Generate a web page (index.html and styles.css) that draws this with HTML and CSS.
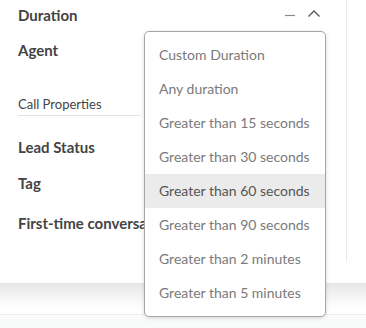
FILE: index.html
```html
<!DOCTYPE html>
<html lang="en">
<head>
<meta charset="UTF-8" />
<title>Filters</title>
<link rel="stylesheet" href="styles.css">
</head>
<body>

<div class="panel">
  <div class="filters">
    <div class="filter-head">
      <span class="filter-title">Duration</span>
      <span class="head-icons">
        <svg width="12" height="12" viewBox="0 0 12 12"><path d="M1 7.5h10" stroke="#8a8a8a" stroke-width="1.2" fill="none"/></svg>
        <svg width="14" height="12" viewBox="0 0 14 12"><path d="M1.5 8.5L7 3l5.5 5.5" stroke="#555" stroke-width="1.3" fill="none"/></svg>
      </span>
    </div>
    <div class="filter-row agent">Agent</div>
    <div class="section-label">Call Properties</div>
    <div class="filter-row lead">Lead Status</div>
    <div class="filter-row tag">Tag</div>
    <div class="filter-row first">First-time conversation</div>

    <ul class="dropdown">
      <li>Custom Duration</li>
      <li>Any duration</li>
      <li>Greater than 15 seconds</li>
      <li>Greater than 30 seconds</li>
      <li class="active">Greater than 60 seconds</li>
      <li>Greater than 90 seconds</li>
      <li>Greater than 2 minutes</li>
      <li>Greater than 5 minutes</li>
    </ul>
  </div>
</div>
<div class="panel-foot"></div>

</body>
</html>
```

FILE: styles.css
```css
* {
  box-sizing: border-box;
}
body {
  margin: 0;
  font-family: 'Lato', 'Noto Sans', sans-serif;
  background: #f9fafa;
  color: #444;
  width: 366px;
  height: 328px;
  overflow: hidden;
}
.panel {
  background: #fff;
  height: 283px;
  padding-right: 19px;
}
.filters {
  position: relative;
  height: 262px;
  border-right: 1px solid #ebebeb;
  padding-left: 18px;
  padding-right: 25px;
}
.filter-head {
  height: 30px;
  display: flex;
  align-items: center;
  justify-content: space-between;
}
.filter-title,
.filter-row {
  font-size: 15px;
  font-weight: 700;
  color: #444;
  white-space: nowrap;
}
.head-icons {
  display: flex;
  align-items: center;
  gap: 11px;
  margin-top: -3px;
}
.filter-row {
  display: flex;
  align-items: center;
}
.agent {
  height: 40px;
}
.section-label {
  margin-top: 20px;
  height: 26px;
  font-size: 13px;
  color: #444;
  line-height: 28px;
  border-bottom: 1px solid #e4e4e4;
  margin-right: 180px;
}
.lead {
  margin-top: 14px;
  height: 34px;
}
.tag {
  margin-top: 2px;
  height: 34px;
}
.first {
  margin-top: 4px;
  height: 38px;
}
.dropdown {
  position: absolute;
  left: 144px;
  top: 31px;
  width: 182px;
  height: 286px;
  margin: 0;
  padding: 6px 0;
  list-style: none;
  background: #fff;
  border: 1px solid #a6a6a6;
  border-radius: 5px;
  box-shadow: 0 1px 4px rgba(0,0,0,0.15);
}
.dropdown li {
  height: 34px;
  line-height: 34px;
  padding-left: 14px;
  font-size: 14px;
  color: #7a7a7a;
  white-space: nowrap;
}
.dropdown li.active {
  background: #ebebeb;
  color: #555;
}
.panel-foot {
  height: 32px;
  background: linear-gradient(#e6e6e6, #fdfdfd 70%, #fff);
  border-bottom: 1px solid #eef0f0;
}
```
